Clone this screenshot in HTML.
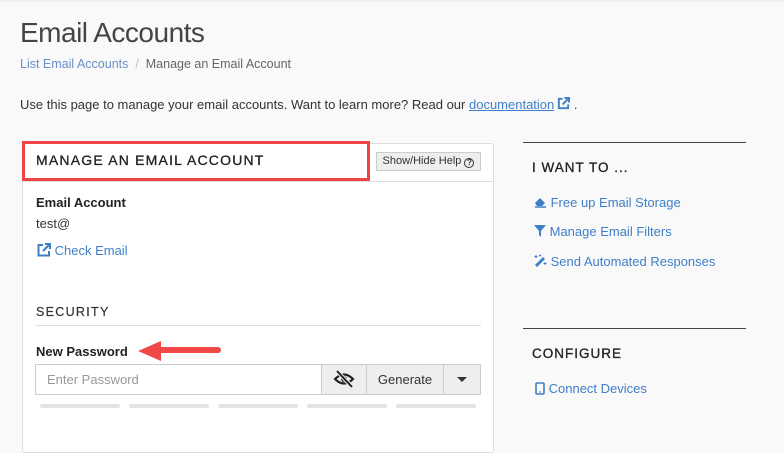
<!DOCTYPE html>
<html><head><meta charset="utf-8"><style>
*{box-sizing:border-box;margin:0;padding:0}
body{width:784px;height:445px;overflow:hidden;background:#f9f9f9;font-family:"Liberation Sans",sans-serif;color:#333;position:relative}
.a{position:absolute;white-space:nowrap}
.blue{color:#3f7fc8}
</style></head><body>
<div class="a" style="left:0;top:0;width:784px;height:2px;background:#efefef"></div>
<div class="a" style="left:20px;top:17px;font-size:28px;font-weight:300;color:#444;letter-spacing:-0.5px">Email Accounts</div>
<div class="a" style="left:20px;top:57px;font-size:12.5px;color:#666"><span style="color:#6b8fc7">List Email Accounts</span> <span style="color:#bbb">&nbsp;/&nbsp;</span> Manage an Email Account</div>
<div class="a" style="left:20px;top:97px;font-size:13px;color:#333">Use this page to manage your email accounts. Want to learn more? Read our <span class="blue" style="text-decoration:underline">documentation</span><svg width="13" height="13" viewBox="0 0 14 14" style="vertical-align:-1px;margin-left:3px"><path d="M6 2H2v10h10V8" fill="none" stroke="#3f7fc8" stroke-width="2"/><path d="M8 1h5v5M13 1L6 8" fill="none" stroke="#3f7fc8" stroke-width="2"/></svg> .</div>

<div class="a" style="left:22px;top:143px;width:472px;height:310px;background:#fff;border:1px solid #ddd;border-radius:3px"></div>
<div class="a" style="left:22px;top:181px;width:472px;height:1px;background:#ddd"></div>
<div class="a" style="left:22px;top:141px;width:348px;height:40px;border:3px solid #ee4444;background:#fff"></div>
<div class="a" style="left:36px;top:152px;font-size:14px;letter-spacing:1.2px;color:#222;-webkit-text-stroke:0.3px #222">MANAGE AN EMAIL ACCOUNT</div>
<div class="a" style="left:376px;top:152px;width:105px;height:19px;border:1px solid #ccc;background:#eee;font-size:11px;line-height:17px;text-align:center;color:#333">Show/Hide Help <span style="display:inline-block;width:10px;height:10px;border:1.3px solid #333;border-radius:50%;font-size:8px;line-height:8px;font-weight:bold;vertical-align:-1px">?</span></div>

<div class="a" style="left:36px;top:195px;font-size:13px;font-weight:bold;color:#222">Email Account</div>
<div class="a" style="left:36px;top:216px;font-size:13px">test@</div>
<div class="a blue" style="left:37px;top:243px;font-size:13px"><svg width="14" height="14" viewBox="0 0 14 14" style="vertical-align:-2px"><path d="M6 2H1.5v10.5H12V8" fill="none" stroke="#3f7fc8" stroke-width="2"/><path d="M8 1h5v5M13 1L6 8" fill="none" stroke="#3f7fc8" stroke-width="2"/></svg> Check Email</div>

<div class="a" style="left:36px;top:305px;font-size:12.5px;letter-spacing:1.3px;color:#333;-webkit-text-stroke:0.2px #333">SECURITY</div>
<div class="a" style="left:36px;top:325px;width:445px;height:1px;background:#ddd"></div>
<div class="a" style="left:36px;top:344px;font-size:13px;font-weight:bold;color:#222">New Password</div>
<svg class="a" style="left:136px;top:340px" width="88" height="26" viewBox="0 0 88 26"><path d="M82 10H22" stroke="#f04747" stroke-width="6" stroke-linecap="round"/><path d="M2 11L25 1V21Z" fill="#f04747"/></svg>

<div class="a" style="left:35px;top:364px;width:446px;height:31px;border:1px solid #ccc;background:#fff"></div>
<div class="a" style="left:47px;top:372px;font-size:13px;color:#999">Enter Password</div>
<div class="a" style="left:321px;top:365px;width:45px;height:29px;background:#eee;border-left:1px solid #ccc"></div>
<svg class="a" style="left:333px;top:370px" width="22" height="18" viewBox="0 0 22 18"><path d="M2 9Q11 0 20 9Q11 18 2 9Z" fill="none" stroke="#222" stroke-width="2.2"/><circle cx="11" cy="9" r="3" fill="#222"/><path d="M4 1L19 17" stroke="#eee" stroke-width="4"/><path d="M4 1L19 17" stroke="#222" stroke-width="2"/></svg>
<div class="a" style="left:366px;top:365px;width:77px;height:29px;background:#eee;border-left:1px solid #ccc;font-size:13px;line-height:29px;text-align:center">Generate</div>
<div class="a" style="left:443px;top:365px;width:37px;height:29px;background:#eee;border-left:1px solid #ccc"></div>
<div class="a" style="left:457px;top:377px;width:0;height:0;border-left:5px solid transparent;border-right:5px solid transparent;border-top:5px solid #333"></div>
<div class="a" style="left:40px;top:404px;width:80px;height:4px;background:#e3e3e3;border-radius:2px"></div>
<div class="a" style="left:129px;top:404px;width:80px;height:4px;background:#e3e3e3;border-radius:2px"></div>
<div class="a" style="left:218px;top:404px;width:80px;height:4px;background:#e3e3e3;border-radius:2px"></div>
<div class="a" style="left:307px;top:404px;width:80px;height:4px;background:#e3e3e3;border-radius:2px"></div>
<div class="a" style="left:396px;top:404px;width:80px;height:4px;background:#e3e3e3;border-radius:2px"></div>

<div class="a" style="left:523px;top:142px;width:223px;height:1px;background:#444"></div>
<div class="a" style="left:532px;top:160px;font-size:13.5px;letter-spacing:1px;color:#222;-webkit-text-stroke:0.3px #222">I WANT TO ...</div>
<div class="a blue" style="left:534px;top:195px;font-size:13px"><svg width="13" height="12" viewBox="0 0 13 12" style="vertical-align:-1px"><path d="M1 7L6 2L11 7L8 10H3Z" fill="#3f7fc8"/><path d="M1 11H12" stroke="#3f7fc8" stroke-width="1.5"/></svg> Free up Email Storage</div>
<div class="a blue" style="left:534px;top:224px;font-size:13px"><svg width="12" height="12" viewBox="0 0 12 12" style="vertical-align:-1px"><path d="M0 0H12L7 6V12L5 10V6Z" fill="#3f7fc8"/></svg> Manage Email Filters</div>
<div class="a blue" style="left:534px;top:254px;font-size:13px"><svg width="13" height="13" viewBox="0 0 13 13" style="vertical-align:-1px"><path d="M2 12L10 4" stroke="#3f7fc8" stroke-width="3"/><path d="M2 1v3M0.5 2.5h3M11 8v3M9.5 9.5h3M6 0.5v2M5 1.5h2" stroke="#3f7fc8" stroke-width="1"/></svg> Send Automated Responses</div>

<div class="a" style="left:523px;top:328px;width:223px;height:1px;background:#444"></div>
<div class="a" style="left:532px;top:346px;font-size:13.5px;letter-spacing:1px;color:#222;-webkit-text-stroke:0.3px #222">CONFIGURE</div>
<div class="a blue" style="left:535px;top:381px;font-size:13px"><svg width="10" height="13" viewBox="0 0 10 13" style="vertical-align:-2px"><rect x="1" y="1" width="8" height="11" rx="1" fill="none" stroke="#3f7fc8" stroke-width="1.6"/><path d="M4 10h2" stroke="#3f7fc8"/></svg> Connect Devices</div>
</body></html>
